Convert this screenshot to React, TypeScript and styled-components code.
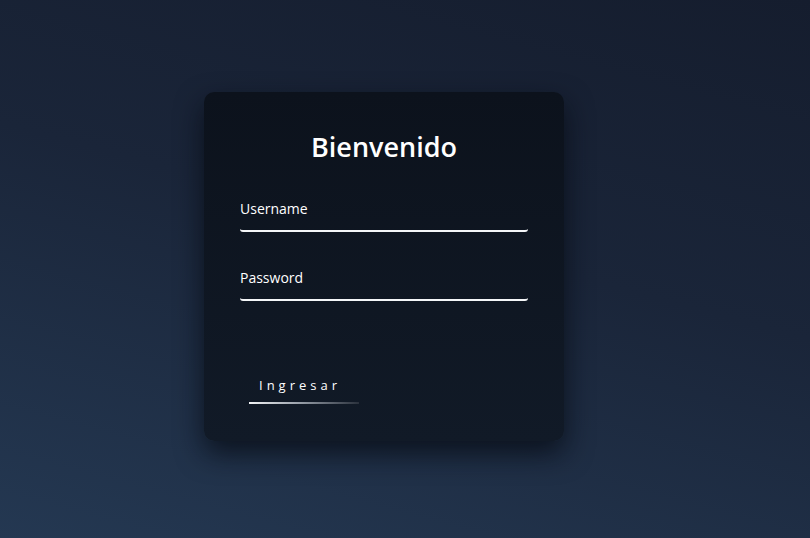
import styled, { createGlobalStyle } from "styled-components";

const GlobalStyle = createGlobalStyle`
  html, body {
    margin: 0;
    padding: 0;
    height: 100%;
  }
  body {
    font-family: "Open Sans", "Noto Sans", sans-serif;
  }
`;

const Page = styled.div`
  box-sizing: border-box;
  width: 100%;
  min-height: 538px;
  display: flex;
  justify-content: center;
  align-items: flex-start;
  padding: 92px 42px 0 0;
  background: linear-gradient(195deg, #151d2e 0%, #1a2539 45%, #243852 100%);
`;

const Card = styled.form`
  box-sizing: border-box;
  width: 360px;
  height: 349px;
  padding: 36px 36px 0;
  border-radius: 10px;
  background: linear-gradient(180deg, #0c121c 0%, #111a27 100%);
  box-shadow: 0 12px 28px rgba(6, 10, 18, 0.75);
  display: flex;
  flex-direction: column;
`;

const Title = styled.h1`
  margin: 0 0 33px;
  text-align: center;
  color: #ffffff;
  font-size: 27px;
  font-weight: 600;
  line-height: 38px;
`;

const Field = styled.label`
  display: flex;
  flex-direction: column;
  margin-bottom: 36px;
`;

const Label = styled.span`
  color: #ffffff;
  font-size: 14px;
  line-height: 20px;
  margin-bottom: 4px;
`;

const Input = styled.input`
  box-sizing: border-box;
  width: 100%;
  height: 9px;
  padding: 0;
  border: none;
  border-bottom: 2.5px solid #f4f6f8;
  border-radius: 0 0 3px 3px;
  background: transparent;
  color: #ffffff;
  outline: none;
`;

const Submit = styled.button`
  align-self: flex-start;
  margin: 39px 0 0 9px;
  padding: 0 0 10px 10px;
  width: 110px;
  text-align: left;
  border: none;
  background: transparent;
  color: #ffffff;
  font-family: "Open Sans", "Noto Sans", sans-serif;
  font-size: 13px;
  letter-spacing: 4px;
  position: relative;
  cursor: pointer;
  &::after {
    content: "";
    position: absolute;
    left: 0;
    bottom: 0;
    width: 100%;
    height: 2px;
    background: linear-gradient(90deg, #f2f4f6 0%, #9aa1ab 45%, #2a313c 100%);
  }
`;

export default function App() {
  return (
    <>
      <GlobalStyle />
      <Page>
        <Card onSubmit={(e) => e.preventDefault()}>
          <Title>Bienvenido</Title>
          <Field>
            <Label>Username</Label>
            <Input type="text" />
          </Field>
          <Field>
            <Label>Password</Label>
            <Input type="password" />
          </Field>
          <Submit type="submit">Ingresar</Submit>
        </Card>
      </Page>
    </>
  );
}
